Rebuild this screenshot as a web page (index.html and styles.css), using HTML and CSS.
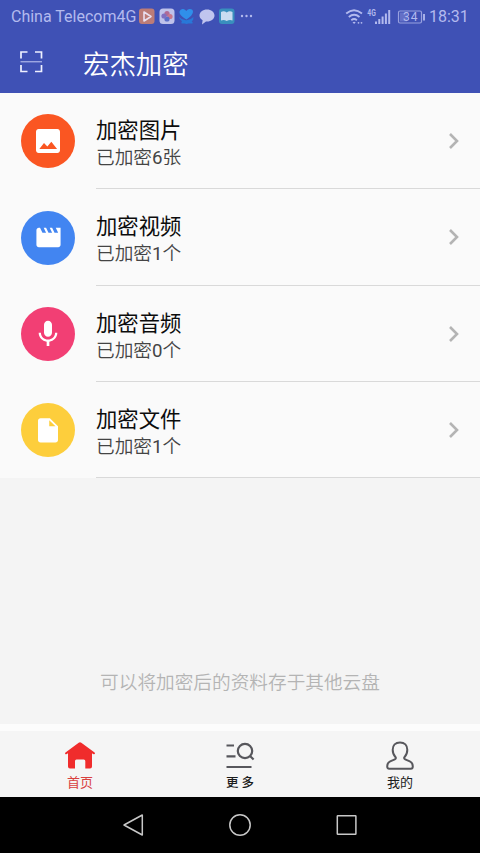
FILE: index.html
```html
<!DOCTYPE html>
<html lang="zh-CN">
<head>
<meta charset="utf-8">
<title>宏杰加密</title>
<link rel="stylesheet" href="styles.css">
</head>
<body>
<div class="phone">
  <header class="top">
    <div class="status">
      <span class="carrier">China Telecom4G</span>
      <svg class="notices" width="118" height="20" viewBox="0 0 118 20">
        <rect x="1" y="2.5" width="15.5" height="15.5" rx="3" fill="#bd7c77"/>
        <path d="M6 6v9l7-4.500z" fill="none" stroke="#eadff0" stroke-width="1.600" stroke-linejoin="round"/>
        <rect x="21.500" y="2.500" width="15" height="15.500" rx="3.500" fill="#bfc2ea"/>
        <circle cx="29" cy="7.600" r="2.600" fill="#b06a96"/>
        <circle cx="32" cy="10.500" r="2.600" fill="#c9788c"/>
        <circle cx="29" cy="13" r="2.600" fill="#5b6fc8"/>
        <circle cx="26" cy="10" r="2.600" fill="#7f6fc0"/>
        <path d="M48.500 13.500C44 11 41 8 41.500 5.500q.8-3 3.800-2.500 2 .3 3 2 1.200-2 3.500-2 3.300.2 3.200 3-.5 3.500-6.500 7.500z" fill="#2f8fea"/>
        <path d="M41 11q3.500 3.500 7.500 3.200 4-.2 7-3.200.3 3-1.800 4.200 1.500 1 .8 2.300h-4.200q-1.800.8-3.600 0h-3.200q-.5-1.200.5-2.300-2.500-1.300-3-4.200z" fill="#2878d8"/>
        <path d="M69 3.500c4.200 0 7.500 2.600 7.500 6s-3.300 6-7.500 6l-1 0-4 3 .6-4.200C62.800 13.200 61.500 11.500 61.500 9.500c0-3.400 3.300-6 7.500-6z" fill="#c0c5ef"/>
        <rect x="81" y="2.500" width="15.500" height="15.500" rx="3" fill="#398fbd"/>
        <path d="M83 6q3-1.500 5.700.5Q91.500 4.500 94.500 6v8.500q-3-1-5.800.5-2.700-1.500-5.700-.5z" fill="#c9dcf1"/>
        <g fill="#b3baee"><circle cx="104" cy="10" r="1.200"/><circle cx="108.500" cy="10" r="1.200"/><circle cx="113" cy="10" r="1.200"/></g>
      </svg>
      <span class="spacer"></span>
      <svg class="signal" width="80" height="20" viewBox="0 0 80 20">
        <g fill="none" stroke="#b3baee" stroke-width="1.800">
          <path d="M1.200 7.500q7.800-6.600 15.800 0"/><path d="M3.800 11q5.300-4.500 10.700 0"/><path d="M6.300 14.200q2.800-2.400 5.600 0"/>
        </g>
        <path d="M7.500 16.200l1.600 1.800 1.600-1.800q-1.600-1-3.200 0z" fill="#b3baee"/>
        <circle cx="13.500" cy="16.800" r=".9" fill="#b3baee"/><circle cx="16.500" cy="16.800" r=".9" fill="#b3baee"/>
        <text x="22.300" y="10" class="net" textLength="8.500" lengthAdjust="spacingAndGlyphs">4G</text>
        <path d="M31 18v-2.500M34.300 18v-5M37.600 18V10.500M40.900 18V7.500M44.200 18V4" stroke="#b3baee" stroke-width="2"/>
        <rect x="53.500" y="5" width="23" height="12" rx="1.500" fill="none" stroke="#98a1df" stroke-width="1.200"/>
        <rect x="55" y="6.500" width="7" height="9" fill="#6470c6"/>
        <path d="M79 8v6.500" stroke="#b3baee" stroke-width="1.800"/>
        <text x="58" y="15" class="charge">34</text>
      </svg>
      <span class="clock">18:31</span>
    </div>
    <div class="bar">
      <svg class="scan" width="24" height="24" viewBox="0 0 24 24" fill="none" stroke="#eef0ff" stroke-width="1.700">
        <path d="M2 8.500V2h6.500M16 2h6.500v6.500M22.500 15v6.500H16M8.500 21.500H2V15"/>
        <path d="M1.500 11.800h21.500" stroke-width="1" stroke="#c5cbf4"/>
      </svg>
      <h1>宏杰加密</h1>
    </div>
  </header>

  <main>
    <ul class="list">
      <li>
        <span class="badge orange"><svg width="32" height="32" viewBox="0 0 24 24"><path fill="#fff" d="M21 19V5c0-1.100-.9-2-2-2H5c-1.100 0-2 .9-2 2v14c0 1.100.9 2 2 2h14c1.100 0 2-.9 2-2zM9 13.500l2.500 2.700 3-3.700 4.300 5.500H5.500L9 13.500z"/></svg></span>
        <div class="row"><div class="words"><h2>加密图片</h2><p>已加密<b>6</b>张</p></div><svg class="more" width="12" height="18" viewBox="0 0 12 18"><path d="M2 2l7 7-7 7"/></svg></div>
      </li>
      <li>
        <span class="badge blue"><svg width="29" height="29" viewBox="0 0 24 24"><path fill="#fff" d="M18 4l2 4h-3l-2-4h-2l2 4h-3l-2-4H8l2 4H7L5 4H4c-1.100 0-1.990.9-1.990 2L2 18c0 1.100.9 2 2 2h16c1.100 0 2-.9 2-2V4h-4z"/></svg></span>
        <div class="row"><div class="words"><h2>加密视频</h2><p>已加密<b>1</b>个</p></div><svg class="more" width="12" height="18" viewBox="0 0 12 18"><path d="M2 2l7 7-7 7"/></svg></div>
      </li>
      <li>
        <span class="badge pink"><svg width="32" height="32" viewBox="0 0 24 24"><path fill="#fff" d="M12 14c1.660 0 2.990-1.340 2.990-3L15 5c0-1.660-1.340-3-3-3S9 3.340 9 5v6c0 1.660 1.340 3 3 3zm5.300-3c0 3-2.540 5.100-5.300 5.100S6.700 14 6.700 11H5c0 3.410 2.720 6.230 6 6.720V21h2v-3.280c3.280-.48 6-3.300 6-6.720h-1.700z"/></svg></span>
        <div class="row"><div class="words"><h2>加密音频</h2><p>已加密<b>0</b>个</p></div><svg class="more" width="12" height="18" viewBox="0 0 12 18"><path d="M2 2l7 7-7 7"/></svg></div>
      </li>
      <li>
        <span class="badge yellow"><svg width="30" height="30" viewBox="0 0 24 24"><path fill="#fff" d="M6 2.500c-1.100 0-1.990.9-1.990 2L4 20c0 1.100.89 2 1.990 2H18c1.100 0 2-.9 2-2V9l-6.500-6.500z"/><path fill="#fdce3c" d="M13 4.200V9h5z"/></svg></span>
        <div class="row"><div class="words"><h2>加密文件</h2><p>已加密<b>1</b>个</p></div><svg class="more" width="12" height="18" viewBox="0 0 12 18"><path d="M2 2l7 7-7 7"/></svg></div>
      </li>
    </ul>
    <p class="hint">可以将加密后的资料存于其他云盘</p>
  </main>

  <nav class="tabs">
    <a class="tab active">
      <svg width="32" height="30" viewBox="0 0 32 30"><path fill="#f02c2c" d="M16 1.200q.7 0 1.300.5L30.600 11.500q.8 1 0 1.600-.5.300-1.500-.2L28 12.200V25.500q0 2-2 2h-4.700V20q0-1.500-1.500-1.500h-7.300Q11 18.500 11 20v7.500H6q-2 0-2-2V12.200l-1.200.7q-1 .5-1.500.1-.6-.7.200-1.500L14.700 1.700q.6-.5 1.300-.5z"/></svg>
      <span>首页</span>
    </a>
    <a class="tab">
      <svg width="32" height="30" viewBox="0 0 32 30" fill="none" stroke="#57575c" stroke-width="2.200"><path d="M2.500 4.500h7.500M2.500 15.300h9M2.500 26h25M26 15l3.600 3.500"/><circle cx="21" cy="10" r="7.200"/></svg>
      <span class="spaced">更 多</span>
    </a>
    <a class="tab">
      <svg width="32" height="30" viewBox="0 0 32 30" fill="none" stroke="#57575c" stroke-width="2" stroke-linejoin="round"><path d="M16 1.500c4.600 0 7.300 3 7.300 7.300 0 3.500-1.100 5.600-2.700 7.200-.8.900-.5 1.800.6 2.300l4.600 2c2 .9 3 2.500 3 5 0 1.600-.7 2.500-2 2.500H5.200c-1.300 0-2-.9-2-2.500 0-2.500 1-4.100 3-5l4.600-2c1.100-.5 1.400-1.400.6-2.300C9.800 14.400 8.700 12.300 8.700 8.800 8.700 4.500 11.400 1.500 16 1.500z"/></svg>
      <span>我的</span>
    </a>
  </nav>

  <footer class="keys">
    <svg width="24" height="24" viewBox="0 0 24 24"><path d="M21.300 2v20L3 12z"/></svg>
    <svg width="24" height="24" viewBox="0 0 24 24"><circle cx="12" cy="12" r="10.200"/></svg>
    <svg width="24" height="24" viewBox="0 0 24 24"><rect x="2.300" y="2.700" width="18.600" height="18.600" rx=".5"/></svg>
  </footer>
</div>
</body>
</html>
```
FILE: styles.css
```css
* { box-sizing: border-box; margin: 0; padding: 0; }

body {
  font-family: Roboto, "Noto Sans CJK SC", sans-serif;
  background: #f4f4f4;
}

.phone { display: flex; flex-direction: column; height: 853px; width: 480px; }

.top { height: 93px; background: #3f51b5; flex: none; }

.status { display: flex; align-items: center; height: 32px; padding: 1px 11px 0; color: #b3baee; }
.carrier { font-size: 16px; width: 127px; white-space: nowrap; }
.notices, .signal { display: block; flex: none; }
.notices { margin-top: -1px; }
.spacer { flex: 1; }
.signal { margin-right: 4px; margin-top: -2px; }
.clock { font-size: 16px; width: 40px; white-space: nowrap; }
.net { font-size: 9.5px; font-weight: 700; fill: #b3baee; }
.charge { font-size: 12px; letter-spacing: 1px; fill: #b3baee; }

.bar { display: flex; align-items: center; height: 61px; padding-left: 19px; }
.scan { margin-right: 40px; margin-top: -1px; }
.bar h1 { padding-top: 5px; font-size: 26.4px; line-height: 36px; font-weight: 350; color: #fff; }

main { flex: none; height: 631px; display: flex; flex-direction: column; justify-content: space-between; }

.list { list-style: none; background: #fafafa; }
.list li { display: flex; height: 96.33px; padding-left: 21px; }
.badge {
  display: flex; align-items: center; justify-content: center;
  width: 54px; height: 54px; margin: 21.3px 21px 0 0; border-radius: 50%; flex: none;
}
.orange { background: #fa5622; }
.blue { background: #4285f1; }
.pink { background: #f23f74; }
.yellow { background: #fdce3c; }
.row { display: flex; flex: 1; justify-content: space-between; align-items: center; padding-right: 20px; border-bottom: 1px solid #d9d9d9; }
.words { padding-top: 6.5px; }
.words h2 { font-size: 21.33px; line-height: 28px; font-weight: 400; color: #0c0c0c; }
.words p { font-size: 18.67px; line-height: 26px; font-weight: 350; color: #444; }
.words b { font-weight: 400; }
.more { margin-top: 1px; }
.more path { fill: none; stroke: #b4b4b4; stroke-width: 2.6; }

.hint { padding-bottom: 27px; font-size: 18.67px; line-height: 28px; text-align: center; font-weight: 350; color: #b4b4b4; }

.tabs { display: flex; height: 73px; flex: none; border-top: 7px solid #fcfcfc; background: #f5f5f5; }
.tab { flex: 1; display: flex; flex-direction: column; align-items: center; padding-top: 10px; font-size: 13px; line-height: 20px; color: #1c1c1c; }
.tab span { margin-top: 2px; }
.tab .spaced { font-size: 12.5px; font-weight: 500; }
.active { color: #d9413f; }

.keys { display: flex; flex: 1; justify-content: center; align-items: center; gap: 83px; background: #000; }
.keys path, .keys circle, .keys rect { fill: none; stroke: #c8c8c8; stroke-width: 1.5; stroke-linejoin: round; }
```
